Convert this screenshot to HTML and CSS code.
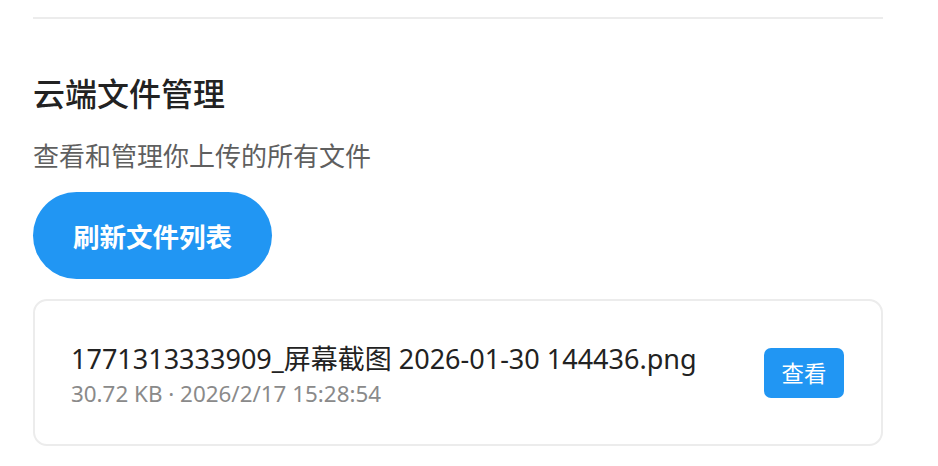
FILE: index.html
```html
<!DOCTYPE html>
<html lang="zh-CN">
<head>
<meta charset="utf-8">
<title>云端文件管理</title>
<link rel="stylesheet" href="styles.css">
</head>
<body>
<div class="page">
  <hr class="divider">
  <section class="cloud">
    <h2 class="title">云端文件管理</h2>
    <p class="subtitle">查看和管理你上传的所有文件</p>
    <button class="refresh">刷新文件列表</button>
    <ul class="file-list">
      <li class="file-card">
        <div class="file-info">
          <div class="file-name">1771313333909_屏幕截图 2026-01-30 144436.png</div>
          <div class="file-meta">30.72 KB · 2026/2/17 15:28:54</div>
        </div>
        <button class="view">查看</button>
      </li>
    </ul>
  </section>
</div>
</body>
</html>
```

FILE: styles.css
```css
* { box-sizing: border-box; }
html, body { margin: 0; padding: 0; background: #fff; }
body {
  font-family: "Segoe UI", "Noto Sans", "Noto Sans CJK SC", sans-serif;
  color: #222;
}
.page {
  width: 850px;
  margin-left: 33px;
  padding-top: 17px;
}
.divider {
  margin: 0;
  border: 0;
  height: 2px;
  background: #ececec;
}
.cloud {
  display: flex;
  flex-direction: column;
  align-items: flex-start;
}
.title {
  margin: 51px 0 0;
  font-size: 32px;
  line-height: 48px;
  font-weight: 500;
  color: #222;
}
.subtitle {
  margin: 19px 0 0;
  font-size: 26px;
  line-height: 38px;
  color: #5f5f5f;
}
.refresh {
  margin-top: 17px;
  height: 87px;
  padding: 0 40px;
  border: 0;
  border-radius: 44px;
  background: #2196f3;
  color: #fff;
  font-family: inherit;
  font-size: 26.5px;
  font-weight: 700;
}
.file-list {
  list-style: none;
  margin: 20px 0 0;
  padding: 0;
  width: 100%;
}
.file-card {
  display: flex;
  align-items: center;
  justify-content: space-between;
  height: 147px;
  padding: 0 37px 0 36px;
  border: 2px solid #ececec;
  border-radius: 14px;
}
.file-info {
  padding-top: 5px;
}
.file-name {
  font-size: 27px;
  line-height: 38px;
  color: #222;
}
.file-meta {
  font-size: 22.4px;
  line-height: 32px;
  color: #8a8a8a;
}
.view {
  width: 80px;
  height: 50px;
  border: 0;
  border-radius: 7px;
  background: #2196f3;
  color: #fff;
  font-family: inherit;
  font-size: 22.4px;
  padding: 0;
}
```
